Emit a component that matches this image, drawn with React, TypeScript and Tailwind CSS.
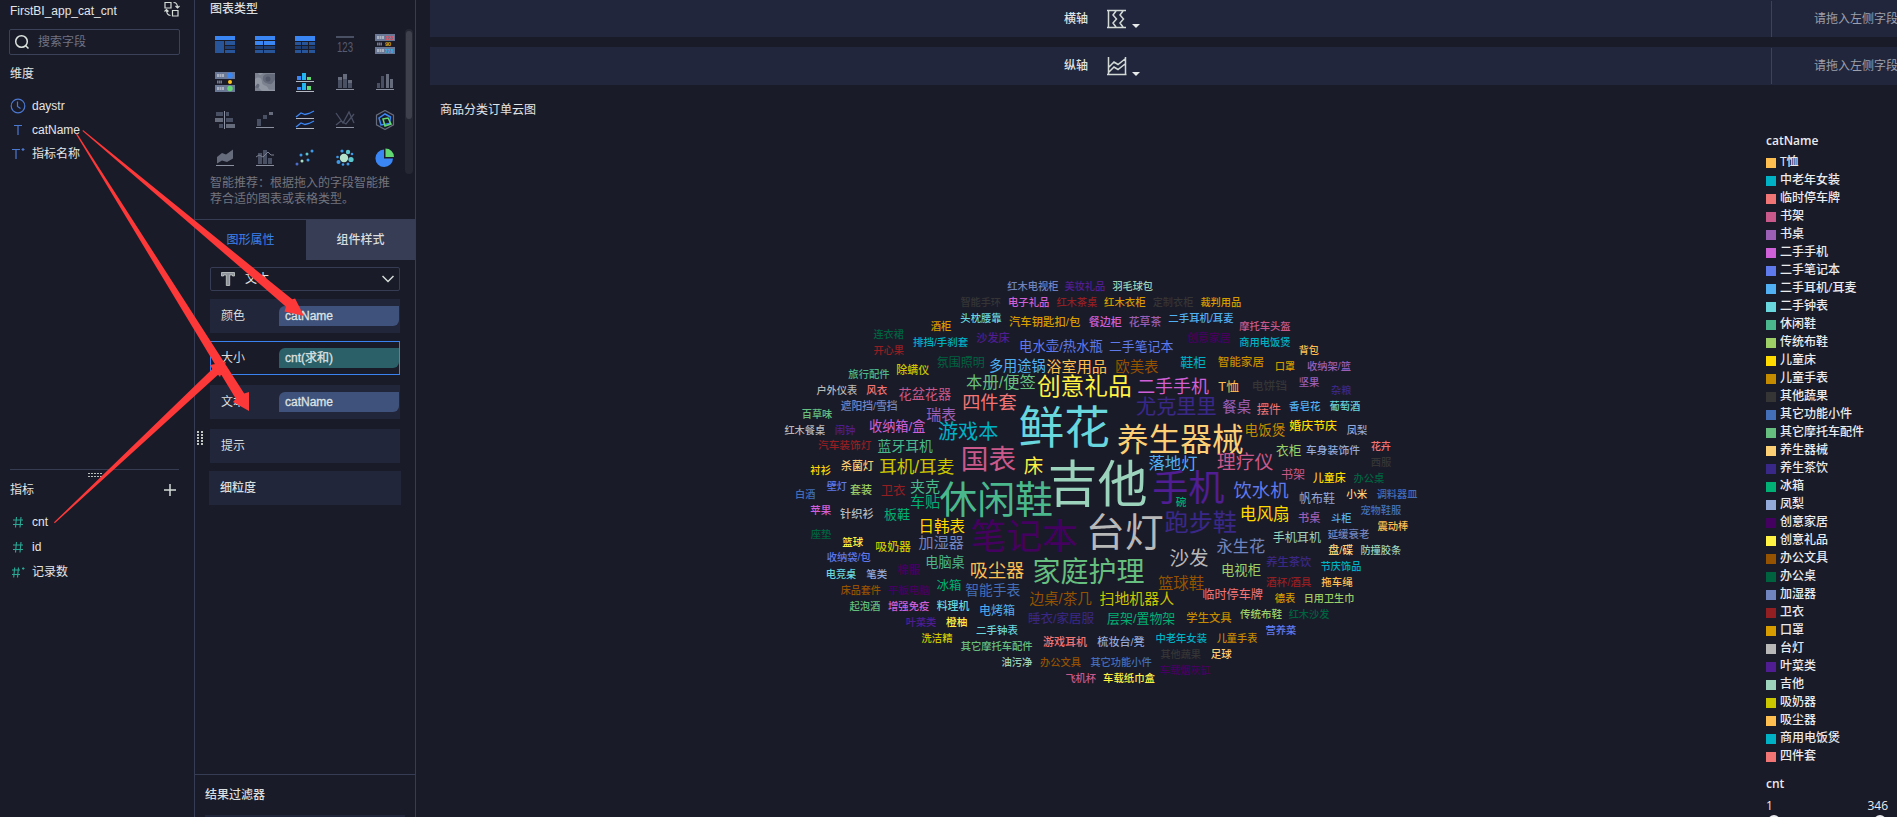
import type { ReactNode } from "react";

const PALETTE = [
  "#ffbf50", "#00b0c4", "#f27576", "#c9598a", "#9b5fb6", "#cf60d9", "#5f7aec", "#51b0f3",
  "#69d5dc", "#4ab88c", "#9ccf66", "#ffda00", "#c48a00", "#353535", "#426fb8", "#66bf7f",
  "#fccf74", "#3a2889", "#00b074", "#92a9d9", "#45015f", "#fff242", "#955200", "#006340",
  "#7085bf", "#931f22", "#d69c00", "#b8b8b8", "#501d93", "#9bd3bc", "#cac600",
];

const LEGEND = [
  "T恤", "中老年女装", "临时停车牌", "书架", "书桌", "二手手机", "二手笔记本", "二手耳机/耳麦",
  "二手钟表", "休闲鞋", "传统布鞋", "儿童床", "儿童手表", "其他蔬果", "其它功能小件", "其它摩托车配件",
  "养生器械", "养生茶饮", "冰箱", "凤梨", "创意家居", "创意礼品", "办公文具", "办公桌", "加湿器",
  "卫衣", "口罩", "台灯", "叶菜类", "吉他", "吸奶器", "吸尘器", "商用电饭煲", "四件套",
];

// text, left, right, vertical middle (thirds of a pixel from the block origin), palette index
type Word = [string, number, number, number, number];

const BLOCKS: { x: number; y: number; words: Word[] }[] = [
  {
    x: 780, y: 270, words: [
      ["红木电视柜", 683, 835, 50, 24], ["美妆礼品", 854, 975, 50, 28], ["智能手环", 542, 662, 98, 13],
      ["电子礼品", 685, 807, 98, 5], ["红木茶桌", 830, 951, 97, 25], ["头枕腰靠", 542, 664, 146, 8],
      ["汽车钥匙扣/包", 686, 902, 156, 26], ["酒柜", 453, 513, 170, 26], ["连衣裙", 281, 371, 194, 23],
      ["排挡/手刹套", 398, 566, 217, 1], ["沙发床", 590, 688, 204, 28], ["开心果", 281, 371, 242, 25],
      ["电水壶/热水瓶", 716, 970, 229, 6], ["氛围照明", 471, 613, 278, 23], ["多用途锅", 628, 796, 288, 7],
      ["浴室用品", 800, 980, 290, 0], ["旅行配件", 206, 328, 313, 9], ["除螨仪", 350, 447, 301, 30],
      ["本册/便签", 557, 769, 337, 15], ["创意礼品", 775, 1055, 350, 21], ["户外仪表", 110, 231, 361, 27],
      ["风衣", 260, 321, 361, 2], ["花盆花器", 357, 512, 373, 3], ["四件套", 548, 708, 398, 2],
      ["遮阳挡/雪挡", 181, 354, 409, 24], ["百草味", 66, 156, 434, 15], ["瑞表", 440, 527, 434, 4],
      ["收纳箱/盒", 266, 437, 469, 5], ["游戏本", 478, 655, 484, 1], ["鲜花", 722, 988, 470, 8],
      ["红木餐桌", 14, 135, 481, 27], ["闹钟", 165, 225, 481, 28],
    ],
  },
  {
    x: 1090, y: 270, words: [
      ["羽毛球包", 68, 188, 50, 29], ["红木衣柜", 43, 166, 97, 26], ["定制衣柜", 189, 309, 97, 13],
      ["裁判用品", 332, 453, 98, 26], ["餐边柜", -3, 94, 156, 5], ["花草茶", 117, 213, 156, 4],
      ["二手耳机/耳麦", 234, 432, 146, 7], ["摩托车头盔", 449, 601, 170, 3], ["商用电饭煲", 449, 601, 217, 1],
      ["创意家居", 292, 420, 204, 20], ["二手笔记本", 58, 249, 229, 6], ["背包", 627, 686, 242, 0],
      ["鞋柜", 272, 348, 277, 1], ["智能家居", 384, 521, 276, 12], ["口罩", 556, 614, 290, 26],
      ["收纳架/篮", 650, 784, 290, 4], ["欧美表", 77, 204, 291, 22], ["二手手机", 143, 355, 349, 5],
      ["T恤", 387, 445, 350, 0], ["电饼铛", 486, 590, 348, 13], ["坚果", 627, 687, 338, 4],
      ["杂粮", 724, 783, 361, 17], ["尤克里里", 142, 380, 411, 17], ["餐桌", 398, 482, 411, 4],
      ["摆件", 501, 572, 421, 2], ["香皂花", 598, 691, 409, 7], ["葡萄酒", 719, 810, 409, 8],
      ["养生器械", 86, 460, 508, 16], ["电饭煲", 465, 585, 481, 12], ["婚庆节庆", 599, 740, 468, 11],
      ["凤梨", 771, 831, 481, 19],
    ],
  },
  {
    x: 780, y: 430, words: [
      ["汽车装饰灯", 115, 273, 48, 25], ["蓝牙耳机", 294, 457, 48, 9], ["国表", 547, 708, 88, 3],
      ["衬衫", 92, 152, 122, 11], ["杀菌灯", 184, 280, 108, 16], ["耳机/耳麦", 296, 524, 111, 30],
      ["床", 733, 788, 109, 21], ["壁灯", 141, 200, 169, 6], ["白酒", 46, 105, 194, 14],
      ["套装", 211, 275, 180, 10], ["卫衣", 303, 375, 182, 25], ["夹克", 391, 479, 171, 9],
      ["车贴", 391, 479, 217, 18], ["休闲鞋", 483, 818, 207, 9], ["吉他", 810, 1100, 160, 29],
      ["苹果", 92, 153, 242, 5], ["针织衫", 181, 280, 252, 27], ["板鞋", 313, 389, 253, 18],
      ["日韩表", 417, 554, 289, 11], ["笔记本", 577, 892, 318, 20], ["座垫", 93, 153, 313, 23],
      ["篮球", 188, 249, 337, 21], ["吸奶器", 287, 392, 350, 30], ["加湿器", 417, 550, 338, 24],
      ["台灯", 923, 1150, 305, 27],
    ],
  },
  {
    x: 1090, y: 430, words: [
      ["衣柜", 559, 633, 62, 10], ["车身装饰件", 649, 809, 60, 19], ["花卉", 843, 902, 50, 2],
      ["西服", 843, 903, 98, 13], ["落地灯", 177, 321, 99, 7], ["理疗仪", 382, 549, 97, 3],
      ["书架", 574, 644, 134, 3], ["儿童床", 669, 766, 145, 11], ["办公桌", 791, 882, 145, 23],
      ["手机", 192, 402, 174, 28], ["碗", 258, 288, 218, 18], ["饮水机", 432, 594, 181, 6],
      ["帆布鞋", 628, 734, 207, 19], ["小米", 770, 831, 193, 16], ["调料器皿", 861, 981, 194, 14],
      ["宠物鞋服", 812, 933, 242, 14], ["跑步鞋", 228, 441, 278, 17], ["电风扇", 451, 597, 252, 11],
      ["书桌", 625, 690, 265, 4], ["斗柜", 724, 784, 265, 7], ["震动棒", 863, 954, 290, 0],
      ["永生花", 381, 524, 349, 24], ["手机耳机", 549, 692, 325, 29], ["延缓衰老", 714, 837, 314, 24],
      ["盘/碟", 714, 791, 361, 16], ["防撞胶条", 812, 933, 362, 29],
    ],
  },
  {
    x: 780, y: 550, words: [
      ["收纳袋/包", 139, 273, 24, 6], ["电竞桌", 138, 228, 73, 8], ["笔类", 260, 321, 73, 19],
      ["棉服", 353, 419, 60, 20], ["电脑桌", 437, 553, 37, 9], ["吸尘器", 571, 731, 62, 0],
      ["家庭护理", 762, 1093, 65, 15], ["床品套件", 183, 302, 122, 22], ["平板电脑", 324, 448, 122, 20],
      ["冰箱", 471, 543, 109, 18], ["智能手表", 557, 720, 121, 14], ["边桌/茶几", 747, 937, 148, 22],
      ["起泡酒", 209, 300, 169, 15], ["增强免疫", 325, 447, 169, 5], ["料理机", 471, 567, 168, 8],
      ["电烤箱", 598, 704, 182, 7], ["睡衣/家居服", 743, 943, 206, 17], ["叶菜类", 378, 468, 218, 28],
      ["橙柚", 499, 561, 218, 21], ["二手钟表", 589, 713, 241, 8], ["洗洁精", 425, 517, 266, 30],
      ["其它摩托车配件", 543, 757, 290, 15], ["游戏耳机", 790, 920, 276, 2], ["油污净", 665, 756, 337, 29],
      ["办公文具", 781, 902, 338, 22], ["其它功能小件", 932, 1114, 338, 14], ["飞机杯", 857, 947, 385, 3],
    ],
  },
  {
    x: 1090, y: 550, words: [
      ["沙发", 240, 354, 25, 27], ["电视柜", 394, 512, 61, 10], ["养生茶饮", 530, 663, 37, 17],
      ["节庆饰品", 693, 813, 50, 1], ["篮球鞋", 205, 341, 101, 22], ["酒杯/酒具", 527, 665, 98, 25],
      ["拖车绳", 695, 787, 97, 0], ["扫地机器人", 30, 251, 146, 30], ["临时停车牌", 338, 518, 134, 2],
      ["德表", 555, 615, 146, 26], ["日用卫生巾", 642, 792, 146, 10], ["层架/置物架", 50, 257, 205, 18],
      ["学生文具", 290, 424, 205, 12], ["传统布鞋", 451, 575, 193, 10], ["红木沙发", 597, 717, 193, 23],
      ["营养菜", 527, 618, 242, 6], ["中老年女装", 197, 350, 266, 1], ["儿童手表", 381, 501, 266, 12],
      ["梳妆台/凳", 21, 165, 276, 19], ["其他蔬果", 212, 332, 314, 13], ["足球", 363, 424, 314, 16],
      ["车载烟灰缸", 210, 361, 362, 20], ["车载纸巾盒", 40, 194, 385, 21],
    ],
  },
];

function ems(text: string) {
  return [...text].reduce((n, c) => n + (c === "/" ? 0.39 : c === "T" ? 0.57 : 1), 0);
}

function WordCloud() {
  return (
    <svg viewBox="430 122 1336 695" className="h-[695px] w-[1336px] shrink-0">
      {BLOCKS.map((b) =>
        b.words.map(([text, l, r, mid, color]) => {
          const size = (r - l) / 3 / (ems(text) - 0.06);
          return (
            <text
              key={text}
              x={b.x + (l + r) / 6 - (size > 20 ? 0.7 : 0)}
              y={b.y + mid / 3 + size * 0.38 + (size < 20 ? 0.4 : 0.6)}
              fontSize={size}
              textAnchor="middle"
              fill={PALETTE[color]}
              className={size < 12 ? "font-medium" : "font-normal"}
            >
              {text}
            </text>
          );
        }),
      )}
    </svg>
  );
}

const G1 = "#4a5064";
const G2 = "#666c7c";

function Bars({ items, base }: { items: [number, number, number, number, string][]; base?: number }) {
  return (
    <>
      {items.map(([x, y, w, h, f], i) => (
        <rect key={i} x={x} y={y} width={w} height={h} fill={f} />
      ))}
      {base !== undefined && <rect x="1" y={base} width="18" height="1" fill="#8a90a0" />}
    </>
  );
}

function Kpi({ rows }: { rows: ReactNode }) {
  return (
    <>
      <rect y="0" width="20" height="7" fill="#6a7896" />
      <rect y="13" width="20" height="7" fill="#6a7896" />
      <path d="M2 3.5h7M2 16.5h7" stroke="#a9b0c0" strokeWidth="3" strokeDasharray="2 .5" />
      <path d="M2 10h5" stroke="#757b8b" strokeWidth="3" strokeDasharray="1.5 .4" />
      {rows}
    </>
  );
}

const CHART_ICONS: ReactNode[] = [
  <Bars items={[[0, 2, 20, 4, "#3a86f5"], [0, 7, 9, 12, "#28549a"], [10, 7, 10, 4, "#28549a"], [10, 12, 10, 3, "#1f3f74"], [10, 16, 10, 3, "#28549a"]]} />,
  <Bars items={[[0, 2, 20, 4, "#3a86f5"], [0, 7, 8, 4, "#3a86f5"], [9, 7, 11, 4, "#3a86f5"], [0, 12, 8, 3, "#1f3f74"], [9, 12, 11, 3, "#1f3f74"], [0, 16, 8, 3, "#28549a"], [9, 16, 11, 3, "#28549a"]]} />,
  <Bars items={[[0, 2, 20, 5, "#3a86f5"], ...[8, 12, 16].flatMap((y) => [0, 7, 14].map((x) => [x, y, 6, 3, y === 12 ? "#1f3f74" : "#28549a"] as [number, number, number, number, string]))]} />,
  <>
    <rect x="1" y="2" width="18" height="2" fill={G1} />
    <text x="10" y="18" textAnchor="middle" fontSize="15" textLength="16" lengthAdjust="spacingAndGlyphs" fill="#565c6e">123</text>
  </>,
  <Kpi rows={<g fontSize="6" fontWeight="700"><text x="10" y="5.6" fill="#ee4c58" textLength="8.5" lengthAdjust="spacingAndGlyphs">123</text><text x="10" y="12.3" fill="#d8a712" textLength="6">90</text><text x="10" y="18.6" fill="#28b4ea" textLength="8.5" lengthAdjust="spacingAndGlyphs">778</text></g>} />,
  <Kpi rows={<><circle cx="15" cy="3.5" r="2.9" fill="#3a86f5" /><circle cx="15" cy="10" r="2" fill="#ffc31e" /><circle cx="15" cy="16.5" r="2.7" fill="#62d973" /></>} />,
  <>
    <rect y="1" width="20" height="18" fill="#7c8190" />
    <path d="M0 7c4-3 7-1 7 3s5 3 6 6 3 1 7 2v1H8c-3 0-2-4-8-4zM3 1h5c-1 2-4 3-5 0z" fill="#9297a4" />
    <path d="M8 5c1-4 7-3 9-3l3 0v6c-2 1-2 5-6 4S7 9 8 5z" fill="#646a7a" />
    <circle cx="13" cy="7" r="2.5" fill="#525869" />
    <path d="M2 12c2-1 3 1 2 3s-3 1-4 0z" fill="#646a7a" />
  </>,
  <Bars items={[[2, 4, 4, 4, "#3a86f5"], [7, 1, 4, 7, "#24b5ee"], [12, 5, 4, 3, "#62d973"], [1, 9, 18, 1, "#b4b8c2"], [2, 15, 4, 3, "#3a86f5"], [7, 11, 4, 7, "#24b5ee"], [12, 14, 4, 4, "#62d973"], [1, 19, 18, 1, "#b4b8c2"]]} />,
  <Bars items={[[3, 5, 4, 3, G2], [3, 8, 4, 8, G1], [8, 2, 4, 5, G2], [8, 7, 4, 9, G1], [13, 8, 4, 3, G2], [13, 11, 4, 5, G1]]} base={17} />,
  <Bars items={[[2, 11, 3, 5, G1], [6, 4, 3, 12, G1], [11, 2, 3, 14, G2], [15, 7, 3, 9, G2]]} base={17} />,
  <Bars items={[[1, 2, 7, 4, G1], [11, 2, 3, 4, G1], [0, 8, 8, 4, G2], [11, 8, 7, 4, G1], [4, 14, 4, 4, G1], [11, 14, 9, 4, G2], [9, 1, 1, 18, "#8a90a0"]]} />,
  <Bars items={[[2, 9, 4, 7, G1], [8, 5, 4, 4, G1], [14, 2, 4, 3, G2]]} base={17} />,
  <>
    <path d="M1 7l5-4 4 1.500 4-1 5-2.500M1 17l5-4 4 1.500 4-1 5-2.500" fill="none" stroke="#3a86f5" strokeWidth="1.300" />
    <path d="M1 8.500h18M1 18.500h18" stroke="#b4b8c2" />
  </>,
  <>
    <path d="M1 3l7 10 6-11 5 11M1 15l5-4 5 3 8-10" fill="none" stroke={G1} strokeWidth="1.300" />
    <rect x="1" y="17" width="18" height="1" fill="#8a90a0" />
  </>,
  <>
    <path d="M10 .5l8.500 4.700v9.600L10 19.500l-8.500-4.700V5.200z" fill="none" stroke="#666c7c" strokeWidth="1.200" />
    <path d="M10 4l5.500 3-1 6.500L6 15l-2-7z" fill="none" stroke="#3a86f5" strokeWidth="1.500" />
    <path d="M8 9l5-1 3 6-6 2z" fill="none" stroke="#62d973" strokeWidth="1.500" />
  </>,
  <>
    <path d="M2 9l5-4 4 1.500 7-5v9l-6 3.500-5-1.500-5 3z" fill={G2} />
    <rect x="1" y="17" width="18" height="1" fill="#8a90a0" />
  </>,
  <>
    <Bars items={[[3, 5, 4, 11, G1], [8, 2, 4, 14, G1], [13, 10, 4, 6, G1]]} base={17} />
    <path d="M1 9l3-2 4 2 5-5 3 3 3 0" fill="none" stroke="#7b8190" />
  </>,
  <>
    <g fill="#3d9ae8"><circle cx="6" cy="7" r="1.500" /><circle cx="17" cy="3" r="1.500" /><circle cx="13" cy="12" r="1.500" /></g>
    <circle cx="12" cy="6" r="1.500" fill="#5cc6cf" /><circle cx="7" cy="13" r="1.500" fill="#a8dfc5" /><circle cx="2" cy="16" r="1.500" fill="#4b6cc9" />
  </>,
  <>
    <circle cx="9" cy="10" r="4.200" fill="#b5e2ca" /><circle cx="13" cy="4" r="2.200" fill="#5cc6cf" /><circle cx="16" cy="11.500" r="2.600" fill="#5cc6cf" />
    <g fill="#3d9ae8"><circle cx="7" cy="3" r="1.600" /><circle cx="2.500" cy="9" r="1.300" /><circle cx="3.500" cy="14" r="2" /><circle cx="8" cy="16.500" r="1.300" /><circle cx="13" cy="16" r="1.500" /><circle cx="17" cy="6" r="1.300" /></g>
  </>,
  <>
    <path d="M9 1.500a8.800 8.800 0 1 0 9 9H9z" fill="#3a86f5" />
    <path d="M10.500.5a8.500 8.500 0 0 1 8.500 8.500h-8.500z" fill="#62d973" />
  </>,
];

function Field({ icon, children, className }: { icon: ReactNode; children: ReactNode; className: string }) {
  return (
    <div className={`flex items-center pl-[10px] text-[#e3e6e6] ${className}`}>
      <svg viewBox="0 0 16 16" className="mr-[6px] size-4">{icon}</svg>
      {children}
    </div>
  );
}

const hash = <path d="M3 6h10M3 10.500h10M6.500 3L5.500 13.500M11 3l-1 10.500" fill="none" stroke="#2ba794" strokeWidth="1.100" />;
const hashDot = (
  <g fill="none" stroke="#2ba794" strokeWidth="1.100">
    <path d="M2 6h8M2 10.500h8M4.700 3.500L3.700 13.500M8.500 3.500l-1 10" />
    <path d="M12 4.500h2.500M13.200 3.300v2.400" />
  </g>
);

function DropRow({ label, pill, kind, className }: { label: string; pill?: string; kind?: "dim" | "measure"; className: string }) {
  return (
    <div className={`flex h-[34px] items-center bg-[#21263b] text-[#dadedf] ${className}`}>
      <span className="w-[58px]">{label}</span>
      {pill && (
        <span
          className={`flex h-5 w-[120px] items-center rounded-tl-[6px] rounded-br-[6px] pl-[6px] text-[#dde2e2] [-webkit-text-stroke:0.3px] ${
            kind === "measure" ? "bg-[#2b6068]" : "bg-[#3f527b]"
          }`}
        >
          {pill}
        </span>
      )}
    </div>
  );
}

function AxisBar({ label, icon, className }: { label: string; icon: ReactNode; className: string }) {
  return (
    <div className={`flex shrink-0 items-center bg-[#22263c] ${className}`}>
      <div className="flex w-[1341px] items-center pl-[634px] text-[#dfe3e3]">
        <span className="w-[43px] font-medium">{label}</span>
        <svg viewBox="0 0 20 20" className="size-5" fill="none" stroke="#d3dad6" strokeWidth="1.500">{icon}</svg>
        <svg viewBox="0 0 8 4" className="mt-[15px] ml-[5px] h-1 w-2"><path d="M0 0h8L4 4z" fill="#e6eae8" /></svg>
      </div>
      <div className="flex h-9 w-[126px] items-center border-l border-[#37455c] pl-[42px] whitespace-nowrap text-[#9ca0ac]">
        请拖入左侧字段
      </div>
    </div>
  );
}

export default function App() {
  return (
    <div className="relative flex h-[817px] w-[1897px] overflow-hidden bg-[#1a1b29] font-['Liberation_Sans','Noto_Sans_CJK_SC',sans-serif] text-[12px] leading-4 text-[#e3e6e6]">
      <aside className="flex w-[194px] shrink-0 flex-col">
        <div className="flex h-[22px] shrink-0 items-center justify-between pr-[14px] pl-[10px]">
          <span>FirstBI_app_cat_cnt</span>
          <svg viewBox="0 0 16 16" className="mb-1 size-4" fill="none" stroke="#d4dcd6" strokeWidth="1.200">
            <path d="M1 1.500h6v5.500H1zM8.500 9.500h5.500v5.500H8.500zM9.500 1.500c3 0 4 1.500 4 5M11.500 5l2 2 2-2M2.500 9c0 3.500 1 5 4 5.500M.5 10.500l2-2 2 2" />
          </svg>
        </div>
        <div className="mt-[7px] ml-[9px] flex h-[26px] w-[171px] shrink-0 items-center rounded-[2px] border border-[#3a4158] pl-1 text-[#6f7382]">
          <svg viewBox="0 0 16 16" className="mr-2 size-4" fill="none" stroke="#dbe3dd" strokeWidth="1.500">
            <circle cx="7.500" cy="7.500" r="5.800" />
            <path d="M11.500 11.500l3 3" />
          </svg>
          搜索字段
        </div>
        <div className="mt-[11px] pl-[10px]">维度</div>
        <Field className="mt-[12px] h-6" icon={<g fill="none" stroke="#4b78d0" strokeWidth="1.200"><circle cx="8" cy="8" r="6.800" /><path d="M7.500 3.500v5l3 2" /></g>}>daystr</Field>
        <Field className="h-6" icon={<path d="M4 3.500h8M8 3.500v9.500" stroke="#4b78d0" strokeWidth="1.200" fill="none" />}>catName</Field>
        <Field className="h-6" icon={<path d="M2 3.500h8M6 3.500v9.500M11.500 3.500h3M13 2v3" stroke="#4b78d0" strokeWidth="1.200" fill="none" />}>指标名称</Field>
        <div className="mt-[303px] ml-[10px] h-px w-[169px] shrink-0 bg-[#363c52]" />
        <svg viewBox="0 0 14 4" shapeRendering="crispEdges" className="mt-[3px] ml-[88px] h-1 w-[14px] shrink-0">
          <path d="M0 .5h14M0 3h14" stroke="#b9beb9" strokeDasharray="2 1" />
        </svg>
        <div className="mt-[5px] flex h-4 items-center justify-between pr-[18px] pl-[10px]">
          指标
          <svg viewBox="0 0 12 12" className="size-3"><path d="M0 6h12M6 0v12" stroke="#d4dcd6" strokeWidth="1.500" /></svg>
        </div>
        <Field className="mt-[11px] h-[25px]" icon={hash}>cnt</Field>
        <Field className="h-[25px]" icon={hash}>id</Field>
        <Field className="h-[25px]" icon={hashDot}>记录数</Field>
      </aside>

      <section className="flex w-[222px] shrink-0 flex-col border-x border-[#363c54]">
        <div className="flex h-[220px] shrink-0 flex-col border-b border-[#363c54] pl-[15px]">
          <div className="mt-px h-4 font-medium text-[#dadedf]">图表类型</div>
          <div className="mt-[12px] flex h-[145px] shrink-0">
            <div className="mt-[5px] grid w-[195px] shrink-0 grid-cols-[repeat(4,40px)_35px] content-start gap-y-[18px]">
              {CHART_ICONS.map((icon, i) => (
                <svg key={i} viewBox="0 0 20 20" className="ml-[5px] size-5">{icon}</svg>
              ))}
            </div>
            <div className="h-[145px] w-[8px] rounded bg-[#252733] px-px pt-[2px]">
              <div className="h-[88px] w-[6px] rounded-full bg-[#3e404c]" />
            </div>
          </div>
          <p className="mt-px w-[184px] text-[#72747d]">智能推荐：根据拖入的字段智能推荐合适的图表或表格类型。</p>
        </div>
        <div className="flex h-10 shrink-0">
          <div className="flex w-[111px] items-center justify-center text-[#3a82f0]">图形属性</div>
          <div className="flex flex-1 items-center justify-center bg-[#373d55] font-medium text-[#dadedf]">组件样式</div>
        </div>
        <div className="flex flex-1 flex-col pt-[7px] pl-[15px]">
          <div className="flex h-6 w-[190px] items-center rounded-[2px] border border-[#363c54] pr-[5px] pl-[10px]">
            <svg viewBox="0 0 14 14" className="mr-[10px] size-[14px]"><path d="M.5.500h13v3.500h-2V3H8.700v10.500H5.300V3H2.500v1h-2z" fill="#8f949c" stroke="#c9cfcc" strokeWidth=".8" /></svg>
            文本
            <svg viewBox="0 0 12 8" className="ml-auto h-2 w-3"><path d="M.5 1L6 6.500 11.500 1" fill="none" stroke="#d4dcd6" strokeWidth="1.500" /></svg>
          </div>
          <DropRow className="mt-[8px] w-[190px] pl-[11px]" label="颜色" pill="catName" kind="dim" />
          <div className="mt-[8px] w-[190px] border border-[#3a82f0]">
            <DropRow className="-my-px bg-transparent pl-[10px]" label="大小" pill="cnt(求和)" kind="measure" />
          </div>
          <DropRow className="mt-[10px] w-[190px] pl-[11px]" label="文本" pill="catName" kind="dim" />
          <DropRow className="mt-[10px] w-[190px] pl-[11px]" label="提示" />
          <DropRow className="mt-[8px] -ml-px w-[192px] pl-[11px] font-medium" label="细粒度" />
        </div>
        <div className="flex h-[43px] shrink-0 flex-col justify-between border-t border-[#363c54] pt-[12px] pl-[10px]">
          <span className="font-medium text-[#dadedf]">结果过滤器</span>
          <div className="h-[2px] w-[200px] bg-[#21263b]" />
        </div>
      </section>

      <main className="ml-[14px] flex w-[1467px] shrink-0 flex-col">
        <AxisBar className="h-[37px]" label="横轴" icon={<path d="M1.500 1v18M0 1.500h19M0 18.500h19M9 2L6 6l3.500 4L6 14l3 4M16 2l-3 4 3.500 4-3.500 4 3 4" />} />
        <AxisBar className="mt-[10px] h-[38px]" label="纵轴" icon={<path d="M1.500 1v18M0 18.500h19.500M18.500 1v18M2 11l5-5 4 2.500 7-5.500M2 16l5-5 4 2.500 7-5.500" />} />
        <div className="mt-[17px] h-[20px] pl-[10px]">商品分类订单云图</div>
        <div className="flex">
          <WordCloud />
          <div className="flex w-[131px] flex-col pt-[12px] font-['Open_Sans','Noto_Sans_CJK_SC',sans-serif] font-medium text-[#e9ebee]">
            <div className="mb-[4px] h-4 font-semibold">catName</div>
            {LEGEND.map((name, i) => (
              <div key={name} className="flex h-[18px] shrink-0 items-center whitespace-nowrap">
                <span className="mt-[2px] mr-1 size-[10px]" style={{ backgroundColor: PALETTE[i % 31] }} />
                <span className="-mt-px">{name}</span>
              </div>
            ))}
            <div className="mt-[11px] h-[22px] font-semibold">cnt</div>
            <div className="flex justify-between pr-[9px]">
              <span>1</span>
              <span>346</span>
            </div>
            <svg viewBox="0 0 131 3" className="h-[3px] w-[131px] shrink-0">
              <circle cx="8" cy="7" r="6" fill="#e9ebee" />
              <circle cx="114" cy="7" r="6" fill="#e9ebee" />
            </svg>
          </div>
        </div>
      </main>

      <svg viewBox="0 0 6 14" shapeRendering="crispEdges" className="absolute top-[431px] left-[197px] h-[14px] w-[6px]">
        <path d="M1 0v14M5 0v14" stroke="#c0c5c0" strokeWidth="2" strokeDasharray="2 1" />
      </svg>
      <svg viewBox="0 0 420 560" className="pointer-events-none absolute top-0 left-0 h-[560px] w-[420px]" fill="#fd3838">
        <path d="M83 130L292.200 299.300l2.900-.9L304 316l-19.500-4.500 1.500-4.800L82.500 131z" />
        <path d="M77 133.500L244.200 393.400l4.800-1.400V411l-16-9 2.800-3.300L76 134.200z" />
        <path d="M54 522.300L212.300 369 210 365l16-3-6 15-2-2.200L54.700 523.300z" />
      </svg>
    </div>
  );
}
